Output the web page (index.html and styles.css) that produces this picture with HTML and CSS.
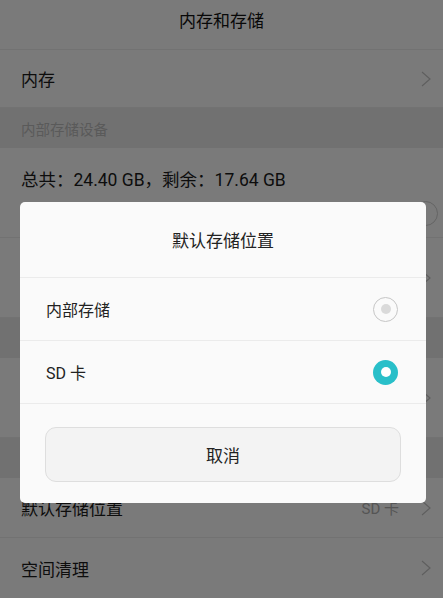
FILE: index.html
```html
<!DOCTYPE html>
<html lang="zh-CN">
<head>
<meta charset="utf-8">
<title>内存和存储</title>
<link rel="stylesheet" href="styles.css">
</head>
<body>
<div class="page">
  <header class="topbar">内存和存储</header>
  <div class="row row-main">
    <span>内存</span>
    <svg class="chev" viewBox="0 0 10 16"><polyline points="1,1 9,8 1,15"/></svg>
  </div>
  <div class="section">内部存储设备</div>
  <div class="row row-storage">
    <span class="total">总共：24.40 GB，剩余：17.64 GB</span>
    <span class="bg-radio"></span>
  </div>
  <div class="row row-tall">
    <span></span>
    <svg class="chev" viewBox="0 0 10 16"><polyline points="1,1 9,8 1,15"/></svg>
  </div>
  <div class="section"></div>
  <div class="row row-tall">
    <span></span>
    <svg class="chev" viewBox="0 0 10 16"><polyline points="1,1 9,8 1,15"/></svg>
  </div>
  <div class="section"></div>
  <div class="row row-main">
    <span>默认存储位置</span>
    <span class="value">SD 卡
      <svg class="chev" viewBox="0 0 10 16"><polyline points="1,1 9,8 1,15"/></svg>
    </span>
  </div>
  <div class="row row-main">
    <span>空间清理</span>
    <svg class="chev" viewBox="0 0 10 16"><polyline points="1,1 9,8 1,15"/></svg>
  </div>
</div>

<div class="scrim"></div>

<div class="dialog">
  <div class="dlg-title">默认存储位置</div>
  <div class="option">
    <span>内部存储</span>
    <span class="radio"></span>
  </div>
  <div class="option">
    <span>SD 卡</span>
    <span class="radio radio-on"></span>
  </div>
  <div class="dlg-actions">
    <button class="btn">取消</button>
  </div>
</div>
</body>
</html>
```
FILE: styles.css
```css
* { box-sizing: border-box; }
html, body {
  margin: 0;
  padding: 0;
}
body {
  width: 443px;
  height: 598px;
  overflow: hidden;
  background: #f5f5f5;
  font-family: Roboto, "Noto Sans CJK SC", sans-serif;
  color: #1a1a1a;
}
.page {
  display: flex;
  flex-direction: column;
}
.topbar {
  height: 50px;
  display: flex;
  align-items: center;
  justify-content: center;
  font-size: 17px;
  color: #111;
  padding-bottom: 10px;
  border-bottom: 1px solid #e4e4e4;
}
.row {
  display: flex;
  align-items: center;
  justify-content: space-between;
  padding: 0 12px 0 21px;
  font-size: 17px;
  border-bottom: 1px solid #e4e4e4;
}
.row-main { height: 58px; }
.page > .row-main:last-child { height: 60px; border-bottom: none; }
.section + .row-main { height: 60px; }
.row-tall { height: 80px; }
.row-storage {
  height: 90px;
  flex-direction: column;
  align-items: stretch;
  justify-content: flex-start;
  padding-top: 21px;
}
.total { line-height: 22px; font-size: 17.5px; }
.bg-radio {
  align-self: flex-end;
  margin-top: 10px;
  margin-right: -7px;
  width: 25px;
  height: 25px;
  border-radius: 50%;
  border: 1.5px solid #c8c8c8;
}
.section {
  height: 40px;
  background: #e3e3e3;
  display: flex;
  align-items: center;
  padding-left: 21px;
  font-size: 14.5px;
  color: #b4b4b4;
}
.chev {
  width: 10px;
  height: 16px;
  fill: none;
  stroke: #bdbdbd;
  stroke-width: 1.2;
  flex: none;
}
.value {
  display: flex;
  align-items: center;
  gap: 22px;
  font-size: 15px;
  color: #aaa;
}
.scrim {
  position: fixed;
  inset: 0;
  background: rgba(0, 0, 0, 0.5);
}
.dialog {
  position: fixed;
  left: 20px;
  top: 202px;
  width: 406px;
  height: 301px;
  background: #fafafa;
  border-radius: 5px;
  display: flex;
  flex-direction: column;
}
.dlg-title {
  height: 76px;
  display: flex;
  align-items: center;
  justify-content: center;
  font-size: 17px;
  color: #222;
  border-bottom: 1px solid #ebebeb;
}
.option {
  height: 63px;
  display: flex;
  align-items: center;
  justify-content: space-between;
  padding: 0 28px 0 26px;
  font-size: 16px;
  color: #222;
  border-bottom: 1px solid #ebebeb;
}
.radio {
  width: 25px;
  height: 25px;
  border-radius: 50%;
  border: 1px solid #c6c6c6;
  display: flex;
  align-items: center;
  justify-content: center;
}
.radio::after {
  content: "";
  width: 10px;
  height: 10px;
  border-radius: 50%;
  background: #dadada;
}
.radio-on {
  border: none;
  background: #29bfc9;
}
.radio-on::after {
  background: #fff;
}
.dlg-actions {
  flex: 1;
  padding: 23px 25px 21px;
  display: flex;
}
.btn {
  flex: 1;
  height: 55px;
  border: 1px solid #dedede;
  border-radius: 11px;
  background: #f3f3f3;
  font-family: Roboto, "Noto Sans CJK SC", sans-serif;
  font-size: 17px;
  color: #222;
}
```
